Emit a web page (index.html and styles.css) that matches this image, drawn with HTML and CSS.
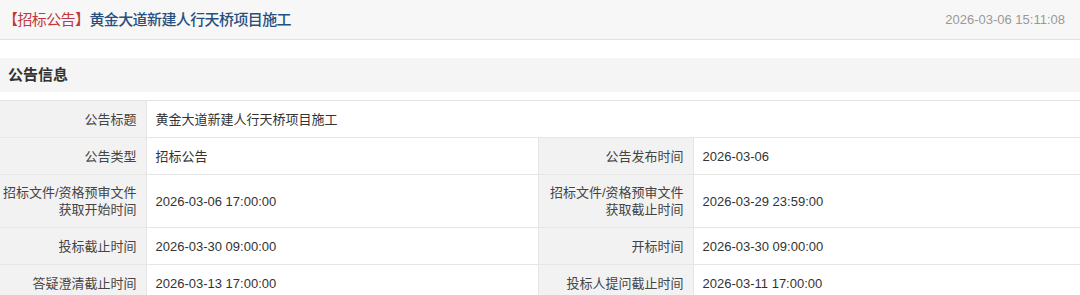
FILE: index.html
```html
<!DOCTYPE html>
<html lang="zh-CN">
<head>
<meta charset="utf-8">
<title>黄金大道新建人行天桥项目施工</title>
<link rel="stylesheet" href="styles.css">
</head>
<body>
<div class="page">
  <div class="topbar">
    <div class="title"><span class="tag">【招标公告】</span><span class="name">黄金大道新建人行天桥项目施工</span></div>
    <div class="date">2026-03-06 15:11:08</div>
  </div>
  <div class="section">公告信息</div>
  <table class="info">
    <colgroup>
      <col class="c-label1">
      <col class="c-val1">
      <col class="c-label2">
      <col class="c-val2">
    </colgroup>
    <tr>
      <th>公告标题</th>
      <td colspan="3">黄金大道新建人行天桥项目施工</td>
    </tr>
    <tr>
      <th>公告类型</th>
      <td>招标公告</td>
      <th>公告发布时间</th>
      <td>2026-03-06</td>
    </tr>
    <tr class="tall">
      <th>招标文件/资格预审文件<br>获取开始时间</th>
      <td>2026-03-06 17:00:00</td>
      <th>招标文件/资格预审文件<br>获取截止时间</th>
      <td>2026-03-29 23:59:00</td>
    </tr>
    <tr>
      <th>投标截止时间</th>
      <td>2026-03-30 09:00:00</td>
      <th>开标时间</th>
      <td>2026-03-30 09:00:00</td>
    </tr>
    <tr>
      <th>答疑澄清截止时间</th>
      <td>2026-03-13 17:00:00</td>
      <th>投标人提问截止时间</th>
      <td>2026-03-11 17:00:00</td>
    </tr>
  </table>
</div>
</body>
</html>
```
FILE: styles.css
```css
html, body {
  margin: 0;
  padding: 0;
  background: #ffffff;
}
body {
  font-family: "Liberation Sans", "Noto Sans CJK SC", sans-serif;
  color: #333333;
  font-size: 13px;
}
.page {
  width: 1080px;
}
.topbar {
  height: 39px;
  background: #f7f7f7;
  border-bottom: 1px solid #e2e2e2;
  display: flex;
  align-items: center;
  justify-content: space-between;
  padding: 0 15px 0 3px;
}
.title {
  font-size: 15px;
  font-family: "Noto Sans CJK SC", sans-serif;
  letter-spacing: -0.6px;
  padding-bottom: 2px;
}
.tag {
  color: #c0393b;
}
.name {
  color: #27507f;
  font-weight: 500;
}
.date {
  color: #999999;
  font-size: 13px;
}
.section {
  margin-top: 18px;
  height: 34px;
  line-height: 32px;
  background: #f5f5f5;
  padding-left: 8px;
  font-size: 15px;
  font-weight: bold;
  color: #333333;
  font-family: "Noto Sans CJK SC", sans-serif;
}
.info {
  margin-top: 8px;
  width: 1080px;
  border-collapse: collapse;
  table-layout: fixed;
}
.c-label1 { width: 146px; }
.c-val1 { width: 392px; }
.c-label2 { width: 155px; }
.c-val2 { width: 387px; }
.info th, .info td {
  border: 1px solid #e6e6e6;
  height: 36px;
  padding: 0;
  font-size: 13px;
  font-weight: normal;
  line-height: 17px;
  color: #333333;
}
.info tr:first-child th, .info tr:first-child td {
  border-top-color: #e2e2e2;
}
.info th {
  background: #f2f2f2;
  text-align: right;
  padding-right: 9px;
  color: #444444;
}
.info td {
  text-align: left;
  padding-left: 9px;
  background: #ffffff;
}
.info tr.tall th, .info tr.tall td {
  height: 52px;
}
.info th:first-child {
  border-left: none;
}
.info td:last-child {
  border-right: none;
}
```
